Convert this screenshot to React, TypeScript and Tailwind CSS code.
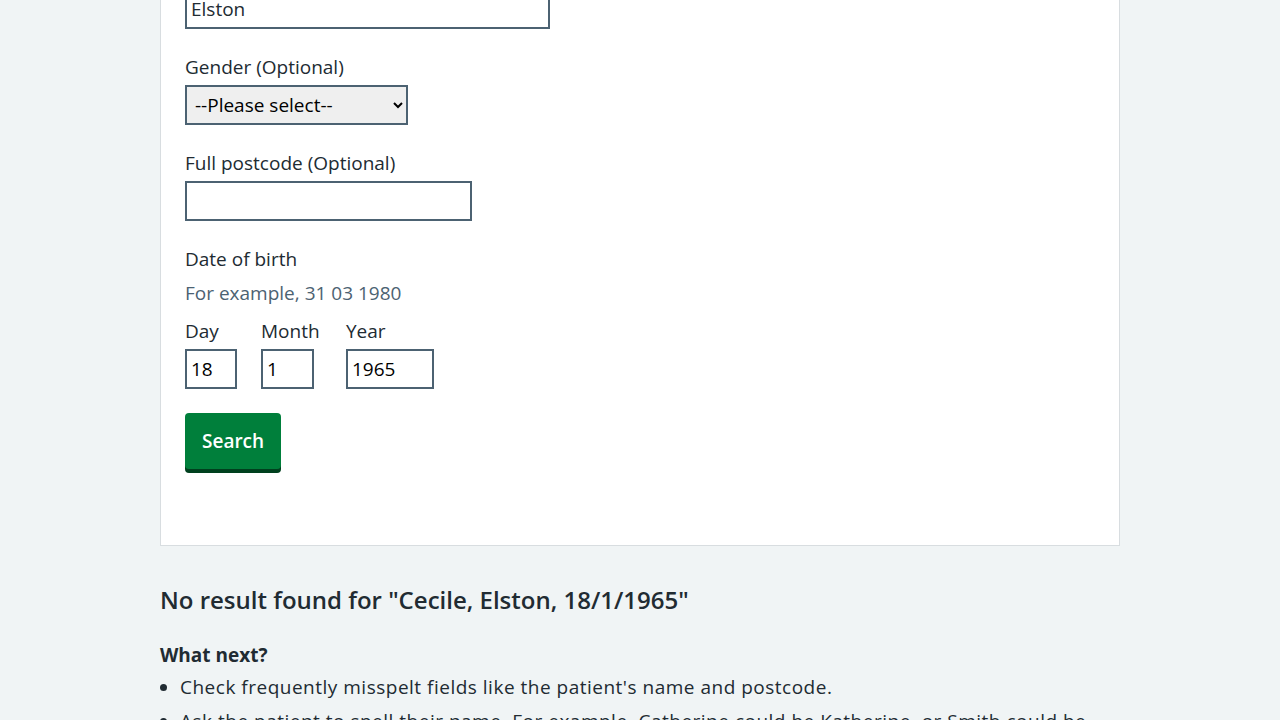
import React from "react";

const Label = ({ children }: { children: React.ReactNode }) => (
  <label className="block text-[19px] leading-7 mb-1">{children}</label>
);

export default function App() {
  return (
    <div className="min-h-screen bg-[#f0f4f5] font-['Open_Sans',sans-serif] text-[#212b32] overflow-hidden">
      <div className="mx-auto w-[960px]">
        {/* search form card, page scrolled so the top is out of view */}
        <div className="-mt-[36px] bg-white border border-[#d8dde0] px-6 pt-6 pb-[76px]">
          <div className="mb-6">
            <input
              defaultValue="Elston"
              className="block h-10 w-[365px] border-2 border-[#4c6272] px-1 text-[19px] outline-none"
            />
          </div>

          <div className="mb-6">
            <Label>Gender (Optional)</Label>
            <select className="block h-10 w-[223px] border-2 border-[#4c6272] bg-[#efefef] pl-1 text-[19px] text-black">
              <option>--Please select--</option>
              <option>Male</option>
              <option>Female</option>
            </select>
          </div>

          <div className="mb-6">
            <Label>Full postcode (Optional)</Label>
            <input className="block h-10 w-[287px] border-2 border-[#4c6272] px-1 text-[19px] outline-none" />
          </div>

          <div className="mb-6">
            <Label>Date of birth</Label>
            <div className="mt-[6px] mb-[10px] text-[19px] leading-7 text-[#4c6272]">For example, 31 03 1980</div>
            <div className="flex gap-6">
              <div>
                <Label>Day</Label>
                <input defaultValue="18" className="block h-10 w-[52px] border-2 border-[#4c6272] px-1 text-[19px] text-black outline-none" />
              </div>
              <div className="w-[61px]">
                <Label>Month</Label>
                <input defaultValue="1" className="block h-10 w-[53px] border-2 border-[#4c6272] px-1 text-[19px] text-black outline-none" />
              </div>
              <div>
                <Label>Year</Label>
                <input defaultValue="1965" className="block h-10 w-[88px] border-2 border-[#4c6272] px-1 text-[19px] text-black outline-none" />
              </div>
            </div>
          </div>

          <button className="h-14 rounded-[4px] border-2 border-transparent bg-[#007f3b] px-[15px] text-[19px] font-semibold text-white shadow-[0_4px_0_#00401e]">
            Search
          </button>
        </div>

        {/* results */}
        <h2 className="mt-[38px] text-[24px] leading-8 font-semibold">No result found for "Cecile, Elston, 18/1/1965"</h2>
        <h3 className="mt-[25px] text-[19px] leading-7 font-bold">What next?</h3>
        <ul className="mt-1 list-disc pl-5 text-[19px] leading-7 tracking-[0.5px]">
          <li className="mb-[6px]">Check frequently misspelt fields like the patient's name and postcode.</li>
          <li className="mb-[6px]">
            Ask the patient to spell their name. For example, Catherine could be Katherine, or Smith could be Smyth.
          </li>
          <li className="mb-[6px]">Check the date of birth is correct.</li>
        </ul>
      </div>
    </div>
  );
}
